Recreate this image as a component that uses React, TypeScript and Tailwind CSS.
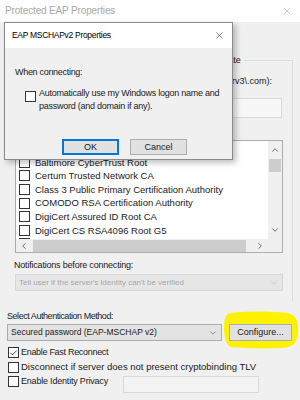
import { Check, X, ChevronDown, ChevronUp, ChevronLeft, ChevronRight } from 'lucide-react'

const font = { fontFamily: '"Liberation Sans", Arial, sans-serif' }

function Box({ checked = false }: { checked?: boolean }) {
  return (
    <span className="w-[11px] h-[11px] shrink-0 border border-[#333] bg-white flex items-center justify-center">
      {checked && <Check size={10} strokeWidth={2.2} className="text-[#222]" />}
    </span>
  )
}

const certs = [
  'AAA Certificate Services',
  'Baltimore CyberTrust Root',
  'Certum Trusted Network CA',
  'Class 3 Public Primary Certification Authority',
  'COMODO RSA Certification Authority',
  'DigiCert Assured ID Root CA',
  'DigiCert CS RSA4096 Root G5',
  'DigiCert Global Root CA',
]

export default function App() {
  return (
    <div
      className="relative w-[300px] h-[400px] bg-[#f0f0f0] overflow-hidden text-[10px] text-[#1a1a1a] leading-none"
      style={font}
    >
      {/* Outer window title */}
      <div className="h-[22px] bg-white flex items-center justify-between pl-[5px] pr-[7px]">
        <span className="text-[10px] tracking-[-0.15px] text-[#a8a8a8]">Protected EAP Properties</span>
        <X size={12} strokeWidth={1} className="text-[#999]" />
      </div>

      {/* Hidden first line */}
      <div className="h-[14px] mt-[8px] pl-[8px] flex items-center">When connecting:</div>

      {/* Group */}
      <div className="ml-[10px] w-[283px] mt-[16px] border-t border-r border-[#dcdcdc] pb-[10px]">
        <div className="-mt-[7px] h-[13px] flex items-center pl-[6px] text-[9px]">
          <span className="bg-[#f0f0f0] pr-[3px] flex items-center gap-[3px] whitespace-nowrap">
            <Box checked />
            Verify the server&apos;s identity by validating the certificate
          </span>
        </div>
        <div className="mt-[8px] h-[13px] flex items-center pl-[7px] gap-[3px] whitespace-nowrap text-[9px]">
          <Box />
          Connect to these servers (examples:srv1;srv2;.*\.srv3\.com):
        </div>
        <div className="mt-[10px] ml-[10px] w-[262px] h-[20px] border border-[#d9d9d9] bg-[#f7f7f7]" />
        <div className="mt-[5px] h-[13px] flex items-center pl-[5px]">Trusted Root Certification Authorities:</div>

        {/* Cert list */}
        <div className="mt-[4px] ml-[5px] w-[268px] h-[113px] border border-[#adadad] bg-white flex flex-col">
          <div className="flex flex-1 min-h-0">
            <div className="flex-1 overflow-hidden pt-[1px] text-[9.5px]">
              {certs.map((c) => (
                <div key={c} className="h-[13.6px] flex items-center gap-[5px] pl-[3px] whitespace-nowrap">
                  <Box />
                  {c}
                </div>
              ))}
            </div>
            <div className="w-[14px] bg-[#f0f0f0] flex flex-col items-center">
              <ChevronUp size={10} strokeWidth={2} className="mt-[4px] text-[#555]" />
              <div className="mt-[4px] w-[12px] h-[13px] bg-[#cdcdcd]" />
              <div className="flex-1" />
              <ChevronDown size={10} strokeWidth={2} className="mb-[4px] text-[#555]" />
            </div>
          </div>
          <div className="h-[13px] flex">
            <div className="flex-1 bg-[#f0f0f0] flex items-center">
              <ChevronLeft size={10} strokeWidth={2} className="ml-[3px] text-[#555]" />
              <div className="ml-[4px] w-[213px] h-[12px] bg-[#cdcdcd]" />
              <div className="flex-1" />
              <ChevronRight size={10} strokeWidth={2} className="mr-[3px] text-[#555]" />
            </div>
            <div className="w-[14px] bg-[#f0f0f0]" />
          </div>
        </div>

        <div className="mt-[6px] h-[13px] flex items-center pl-[4px] text-[9px] tracking-[-0.2px]">
          Notifications before connecting:
        </div>
        <div className="mt-[2px] ml-[5px] w-[268px] h-[17px] bg-[#e6e6e6] border border-[#d6d6d6] flex items-center justify-between pl-[3px] pr-[3px] text-[#a6a6a6] text-[8px]">
          Tell user if the server&apos;s identity can&apos;t be verified
          <ChevronDown size={10} strokeWidth={1.5} className="text-[#bbb]" />
        </div>
      </div>

      <div className="mt-[9px] h-[13px] flex items-center pl-[7px] text-[9px] tracking-[-0.45px]">
        Select Authentication Method:
      </div>
      <div className="mt-[1px] flex pl-[7px] gap-[7px]">
        <div className="w-[215px] h-[17px] bg-[#e3e3e3] border border-[#adadad] flex items-center justify-between pl-[3px] pr-[3px] text-[8.5px]">
          Secured password (EAP-MSCHAP v2)
          <ChevronDown size={10} strokeWidth={1.5} className="text-[#555]" />
        </div>
        <div className="relative z-10 w-[63px] h-[17px] bg-[#e1e1e1] border border-[#adadad] flex items-center justify-center text-[9px]">
          Configure...
        </div>
      </div>

      <div className="mt-[4px] pl-[8px] flex flex-col text-[9px]">
        <div className="h-[15px] flex items-center gap-[2px] tracking-[-0.3px]">
          <Box checked />
          Enable Fast Reconnect
        </div>
        <div className="h-[14px] flex items-center gap-[2px] text-[9.5px]">
          <Box />
          Disconnect if server does not present cryptobinding TLV
        </div>
        <div className="h-[20px] flex items-start">
          <div className="w-[115px] h-[14px] flex items-center gap-[2px] tracking-[-0.2px]">
            <Box />
            Enable Identity Privacy
          </div>
          <div className="mt-[2px] w-[136px] h-[17px] border border-[#d9d9d9] bg-[#f3f3f3]" />
        </div>
      </div>

      {/* Yellow highlighter mark */}
      <svg className="absolute left-[222px] top-[311px]" width="78" height="39" viewBox="0 0 78 39">
        <path
          d="M8 2 C22 0 48 0 66 2 C75 4 77 12 76 22 C75 33 70 37 58 37 C40 38 22 37 9 36 C4 34 2 26 2 17 C2 8 4 3 8 2 Z"
          fill="#fff200"
        />
      </svg>

      {/* Modal dialog */}
      <div className="absolute left-[4px] top-[22px] w-[229px] h-[138px] border border-[#8a8a8a] bg-[#f0f0f0] shadow-[3px_3px_6px_rgba(0,0,0,0.25)] flex flex-col">
        <div className="h-[25px] bg-white flex items-center justify-between pl-[7px] pr-[7px]">
          <span className="text-[8.5px] tracking-[-0.3px] text-black">EAP MSCHAPv2 Properties</span>
          <X size={11} strokeWidth={1.2} className="text-[#333]" />
        </div>
        <div className="pl-[10px] pt-[18px] flex flex-col text-[9px]">
          <div className="h-[12px] flex items-center tracking-[-0.3px]">When connecting:</div>
          <div className="mt-[9px] ml-[10px] flex gap-[3px]">
            <span className="mt-[4px]">
              <Box />
            </span>
            <div className="leading-[13px] whitespace-nowrap tracking-[-0.25px]">
              Automatically use my Windows logon name and
              <br />
              password (and domain if any).
            </div>
          </div>
          <div className="mt-[26px] ml-[47px] flex gap-[11px]">
            <div className="w-[57px] h-[16px] bg-[#e1e1e1] border-2 border-[#0078d7] flex items-center justify-center">
              OK
            </div>
            <div className="w-[57px] h-[16px] bg-[#e1e1e1] border border-[#adadad] flex items-center justify-center">
              Cancel
            </div>
          </div>
        </div>
      </div>
    </div>
  )
}
